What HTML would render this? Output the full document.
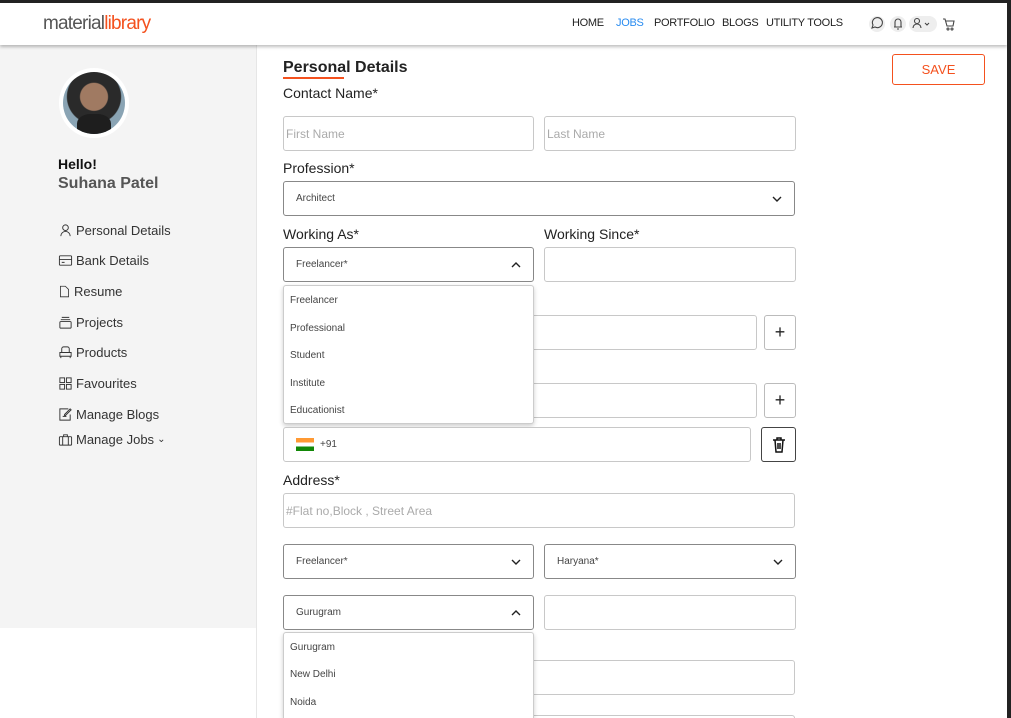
<!DOCTYPE html><html><head><style>
*{box-sizing:border-box;margin:0;padding:0}
html{width:1011px;height:718px;overflow:hidden}
body{width:1011px;height:718px;overflow:hidden;position:relative;background:#fff;font-family:"Liberation Sans",sans-serif;color:#222}
.a{position:absolute}
.inp{position:absolute;border:1px solid #c8c8c8;border-radius:3px;background:#fff;font-size:12px;color:#aaa;padding-left:2px;display:flex;align-items:center}
.sel{position:absolute;border:1px solid #888;border-radius:3px;background:#fff;font-size:10px;color:#444;padding-left:12px;display:flex;align-items:center}
.sel svg{position:absolute;right:12px;top:50%;margin-top:-4px}
.lbl{position:absolute;font-size:14px;color:#222}
.dd{position:absolute;background:#fff;border:1px solid #ccc;border-radius:3px;box-shadow:0 2px 5px rgba(0,0,0,.2);font-size:10px;color:#444}
.dd div{position:absolute;left:6px}
.nav{position:absolute;top:17px;font-size:11px;color:#222;letter-spacing:-0.3px}
.mi{position:absolute;left:58px;font-size:13px;color:#333;display:flex;align-items:center;gap:3px}
.mi svg{width:15px;height:15px}
.btn{position:absolute;border:1px solid #bbb;border-radius:3px;background:#fff;display:flex;align-items:center;justify-content:center;font-size:18px;color:#222}
</style></head><body>
<div class="a" style="left:0;top:0;width:1011px;height:3px;background:#222;z-index:5"></div>
<div class="a" style="left:1007px;top:0;width:4px;height:718px;background:#222;z-index:5"></div>
<div class="a" style="left:0;top:3px;width:1007px;height:42px;background:#fff;box-shadow:0 2px 3px rgba(0,0,0,.25);z-index:2"></div>
<div class="a" style="left:43px;top:13px;font-size:19px;z-index:3;letter-spacing:-0.8px;color:#555">material<span style="color:#f4511e">library</span></div>
<div class="nav" style="left:572px;z-index:3">HOME</div>
<div class="nav" style="left:616px;color:#2a8cf0;z-index:3">JOBS</div>
<div class="nav" style="left:654px;z-index:3">PORTFOLIO</div>
<div class="nav" style="left:722px;z-index:3">BLOGS</div>
<div class="nav" style="left:766px;z-index:3">UTILITY TOOLS</div>
<svg class="a" style="left:866px;top:14px;z-index:3" width="95" height="20" fill="none" stroke="#444" stroke-width="1.1">
<circle cx="11" cy="10" r="8" fill="#eee" stroke="none"/><path d="M6 14 L7 11 A5 5 0 1 1 9 13 Z"/>
<circle cx="32" cy="10" r="8" fill="#eee" stroke="none"/><path d="M28 13h8M29 13V8a3 3 0 0 1 6 0v5M31 15h2"/>
<rect x="43" y="2" width="28" height="16" rx="8" fill="#eee" stroke="none"/><circle cx="51" cy="7" r="2.5"/><path d="M47 14a4 4 0 0 1 8 0M59 9l2 2 2-2"/>
<path d="M77 5h2l2 7h6l1-5h-8"/><circle cx="82" cy="15" r="1"/><circle cx="86" cy="15" r="1"/></svg>
<div class="a" style="left:0;top:45px;width:256px;height:583px;background:#f4f4f4"></div>
<div class="a" style="left:256px;top:45px;width:1px;height:673px;background:#e6e6e6"></div>
<div class="a" style="left:59px;top:68px;width:70px;height:70px;border-radius:50%;background:#fff"></div>
<div class="a" style="left:63px;top:72px;width:62px;height:62px;border-radius:50%;background:radial-gradient(circle at 50% 40%,#a07a62 0 28%,#2a2a2a 30% 55%,#8aa4b4 57%);overflow:hidden"><div class="a" style="left:14px;top:42px;width:34px;height:24px;background:#1e1e1e;border-radius:40% 40% 0 0"></div></div>
<div class="a" style="left:58px;top:156px;font-size:14px;font-weight:bold;color:#111">Hello!</div>
<div class="a" style="left:58px;top:175px;font-size:16px;font-weight:bold;color:#555">Suhana Patel</div>
<div class="mi" style="top:223px"><svg viewBox="0 0 16 16" fill="none" stroke="#333"><circle cx="8" cy="5" r="3"/><path d="M3 14a5 5 0 0 1 10 0"/></svg>Personal Details</div>
<div class="mi" style="top:253px"><svg viewBox="0 0 16 16" fill="none" stroke="#333"><rect x="1.5" y="3" width="13" height="10" rx="1"/><path d="M1.5 7h13M4 10h3"/></svg>Bank Details</div>
<div class="mi" style="top:284px"><svg viewBox="0 0 16 16" fill="none" stroke="#333" style="width:13px"><path d="M3 1.5h6l4 4v9H3z"/></svg>Resume</div>
<div class="mi" style="top:315px"><svg viewBox="0 0 16 16" fill="none" stroke="#333"><rect x="2" y="7" width="12" height="7" rx="1"/><path d="M3 5h10M4 2.5h8"/></svg>Projects</div>
<div class="mi" style="top:345px"><svg viewBox="0 0 16 16" fill="none" stroke="#333"><path d="M4 8V4a2 2 0 0 1 2-2h4a2 2 0 0 1 2 2v4M2 8h12v4H2zM3 12v2M13 12v2"/></svg>Products</div>
<div class="mi" style="top:376px"><svg viewBox="0 0 16 16" fill="none" stroke="#333"><rect x="2" y="2" width="5" height="5"/><rect x="9" y="2" width="5" height="5"/><rect x="2" y="9" width="5" height="5"/><rect x="9" y="9" width="5" height="5"/></svg>Favourites</div>
<div class="mi" style="top:407px"><svg viewBox="0 0 16 16" fill="none" stroke="#333"><path d="M11 2H2v12h11V8M5 10h4M13 2l-6 6v1h1l6-6z"/></svg>Manage Blogs</div>
<div class="mi" style="top:432px"><svg viewBox="0 0 16 16" fill="none" stroke="#333"><rect x="1.5" y="5" width="13" height="9" rx="1"/><path d="M6 5V3h4v2M5 5v9M11 5v9"/></svg>Manage Jobs <span style="font-size:10px">&#x2304;</span></div>
<div class="a" style="left:283px;top:59px;font-size:16px;font-weight:bold;color:#222">Personal Details</div>
<div class="a" style="left:283px;top:77px;width:61px;height:2px;background:#f4511e"></div>
<div class="a" style="left:892px;top:54px;width:93px;height:31px;border:1px solid #f4511e;border-radius:3px;color:#f4511e;font-size:13px;display:flex;align-items:center;justify-content:center">SAVE</div>
<div class="lbl" style="left:283px;top:85px">Contact Name*</div>
<div class="inp" style="left:283px;top:116px;width:251px;height:35px">First Name</div>
<div class="inp" style="left:544px;top:116px;width:252px;height:35px">Last Name</div>
<div class="lbl" style="left:283px;top:160px">Profession*</div>
<div class="sel" style="left:283px;top:181px;width:512px;height:35px">Architect<svg width="10" height="8"><path d="M1 2l4 4 4-4" fill="none" stroke="#222" stroke-width="1.4"/></svg></div>
<div class="lbl" style="left:283px;top:226px">Working As*</div>
<div class="lbl" style="left:544px;top:226px">Working Since*</div>
<div class="sel" style="left:283px;top:247px;width:251px;height:35px">Freelancer*<svg width="10" height="8"><path d="M1 6l4-4 4 4" fill="none" stroke="#222" stroke-width="1.4"/></svg></div>
<div class="inp" style="left:544px;top:247px;width:252px;height:35px"></div>
<div class="inp" style="left:520px;top:315px;width:237px;height:35px"></div>
<div class="btn" style="left:764px;top:315px;width:32px;height:35px">+</div>
<div class="inp" style="left:520px;top:383px;width:237px;height:35px"></div>
<div class="btn" style="left:764px;top:383px;width:32px;height:35px">+</div>
<div class="dd" style="left:283px;top:285px;width:251px;height:139px">
<div style="top:9px">Freelancer</div><div style="top:37px">Professional</div><div style="top:64px">Student</div><div style="top:92px">Institute</div><div style="top:119px">Educationist</div></div>
<div class="inp" style="left:283px;top:427px;width:468px;height:35px;color:#444;font-size:10px;padding-left:12px"><span style="display:inline-block;width:18px;height:13px;background:linear-gradient(#f93 0 33%,#fff 33% 66%,#128807 66%);margin-right:6px"></span>+91</div>
<div class="btn" style="left:761px;top:427px;width:35px;height:35px;border-color:#444"><svg width="14" height="16" fill="none" stroke="#111" stroke-width="1.5"><path d="M1 3h12M5 3V1h4v2M3 3l1 12h6l1-12M6 6v6M8 6v6"/></svg></div>
<div class="lbl" style="left:283px;top:472px">Address*</div>
<div class="inp" style="left:283px;top:493px;width:512px;height:35px">#Flat no,Block , Street Area</div>
<div class="sel" style="left:283px;top:544px;width:251px;height:35px">Freelancer*<svg width="10" height="8"><path d="M1 2l4 4 4-4" fill="none" stroke="#222" stroke-width="1.4"/></svg></div>
<div class="sel" style="left:544px;top:544px;width:252px;height:35px">Haryana*<svg width="10" height="8"><path d="M1 2l4 4 4-4" fill="none" stroke="#222" stroke-width="1.4"/></svg></div>
<div class="sel" style="left:283px;top:595px;width:251px;height:35px">Gurugram<svg width="10" height="8"><path d="M1 6l4-4 4 4" fill="none" stroke="#222" stroke-width="1.4"/></svg></div>
<div class="inp" style="left:544px;top:595px;width:252px;height:35px"></div>
<div class="inp" style="left:520px;top:660px;width:275px;height:35px"></div>
<div class="inp" style="left:520px;top:715px;width:275px;height:3px;border-bottom:none;border-radius:3px 3px 0 0"></div>
<div class="dd" style="left:283px;top:632px;width:251px;height:86px;border-bottom:none;border-radius:3px 3px 0 0">
<div style="top:9px">Gurugram</div><div style="top:36px">New Delhi</div><div style="top:64px">Noida</div></div>
</body></html>
